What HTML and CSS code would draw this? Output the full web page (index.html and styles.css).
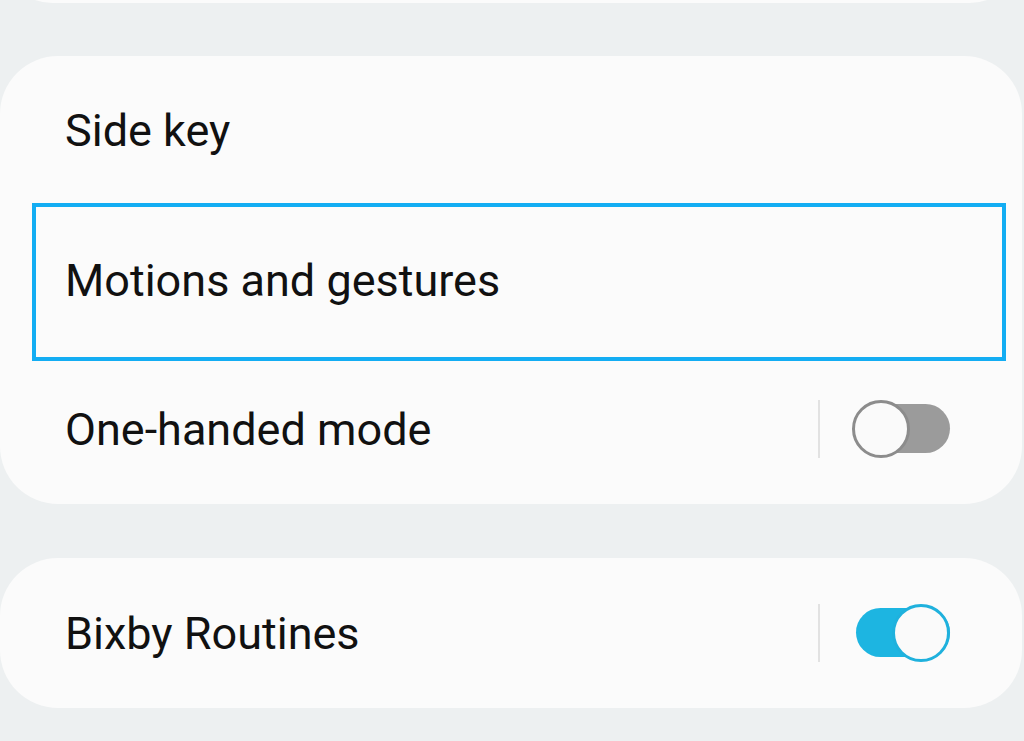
FILE: index.html
```html
<!DOCTYPE html>
<html lang="en">
<head>
  <meta charset="UTF-8">
  <title>Advanced features</title>
  <link rel="stylesheet" href="styles.css">
</head>
<body>
  <div class="card card-prev"></div>

  <div class="card">
    <div class="row">Side key</div>
    <div class="row focused">Motions and gestures</div>
    <div class="row">
      <span class="label">One-handed mode</span>
      <span class="sep"></span>
      <span class="switch"><span class="knob"></span></span>
    </div>
  </div>

  <div class="card">
    <div class="row">
      <span class="label">Bixby Routines</span>
      <span class="sep"></span>
      <span class="switch on"><span class="knob"></span></span>
    </div>
  </div>
</body>
</html>
```

FILE: styles.css
```css
body {
  margin: 0;
  background: #edf0f1;
  font-family: Roboto, "Noto Sans", sans-serif;
  color: #111;
  overflow: hidden;
}
.card {
  background: #fbfbfb;
  border-radius: 58px;
  margin: 0 2px 54px 0;
}
.card-prev {
  height: 105px;
  margin-top: -102px;
  margin-bottom: 53px;
}
.row {
  position: relative;
  height: 149.4px;
  display: flex;
  align-items: center;
  padding: 0 72px 0 65px;
  font-size: 45px;
}
.card:last-child .row {
  height: 150px;
}
.label {
  flex: 1;
}
.focused::after {
  content: "";
  position: absolute;
  left: 32px;
  right: 16px;
  top: -2px;
  bottom: -6px;
  border: 4px solid #13adf3;
}
.sep {
  width: 2px;
  height: 58px;
  background: #e2e2e2;
  margin-right: 32px;
}
.switch {
  position: relative;
  width: 98px;
  height: 58px;
}
.switch::before {
  content: "";
  position: absolute;
  left: 4px;
  right: 0;
  top: 4px;
  height: 49px;
  border-radius: 25px;
  background: #9b9b9b;
}
.knob {
  position: absolute;
  left: 0;
  top: 0;
  width: 52px;
  height: 52px;
  border-radius: 50%;
  border: 3px solid #8c8c8c;
  background: #fafafa;
}
.switch.on::before {
  background: #1db5e1;
}
.switch.on .knob {
  left: auto;
  right: 0;
  border-color: #1fb1dd;
}
```
